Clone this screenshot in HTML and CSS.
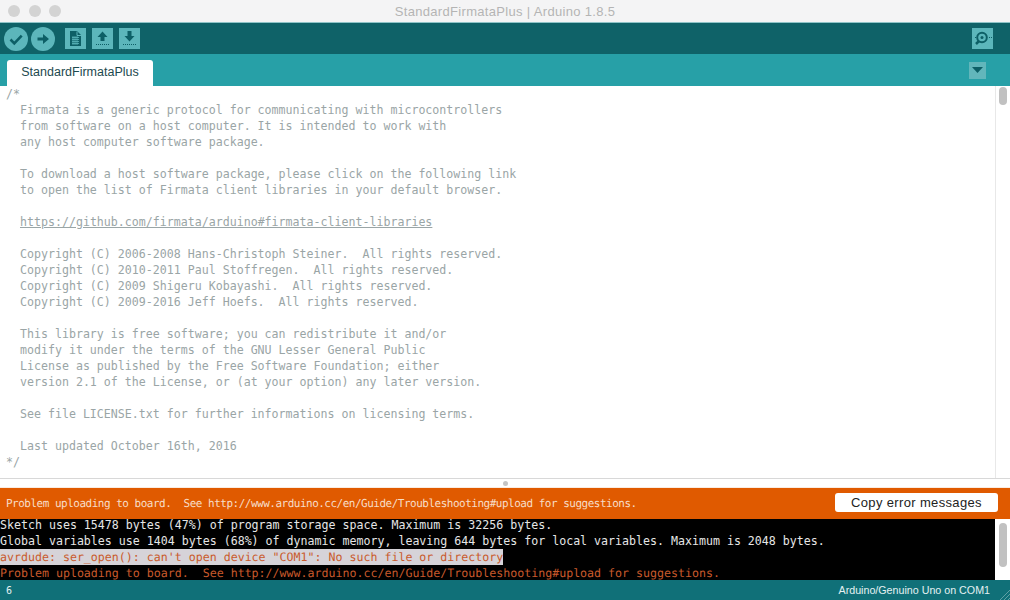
FILE: index.html
```html
<!DOCTYPE html>
<html lang="en">
<head>
<meta charset="utf-8">
<title>StandardFirmataPlus | Arduino 1.8.5</title>
<link rel="stylesheet" href="styles.css">
</head>
<body>
<div class="app">
  <header class="titlebar">
    <div class="lights"><span class="light"></span><span class="light"></span><span class="light"></span></div>
    <div class="title">StandardFirmataPlus | Arduino 1.8.5</div>
  </header>
  <nav class="toolbar">
    <span class="round"><svg width="24" height="24" viewBox="0 0 24 24"><path d="M6.5 12.5l3.8 3.8 7.4-7.6" fill="none" stroke="#0d5f66" stroke-width="2.6"/></svg></span>
    <span class="round"><svg width="24" height="24" viewBox="0 0 24 24"><path d="M6.5 10.6h5.5V7l6 5-6 5v-3.6H6.500z" fill="#0d5f66"/></svg></span>
    <span class="square first"><svg width="21" height="21" viewBox="0 0 21 21"><path d="M5 3h7l4 4v11H5z" fill="#0d5f66"/><path d="M12 3.500v4h4" fill="none" stroke="#5cb6bb"/><path d="M7 9.500h7M7 11.500h7M7 13.500h7M7 15.500h7M8 8v9M10 8v9M12 8v9" stroke="#5cb6bb" stroke-width=".8"/></svg></span>
    <span class="square"><svg width="21" height="21" viewBox="0 0 21 21"><path d="M10.500 3.500l5 5.500h-3v4h-4V9h-3z" fill="#0d5f66"/><path d="M4 16.500h13" stroke="#0d5f66" stroke-dasharray="1 1"/></svg></span>
    <span class="square"><svg width="21" height="21" viewBox="0 0 21 21"><path d="M8.500 3h4v5h3l-5 5.500-5-5.500h3z" fill="#0d5f66"/><path d="M4 16.500h13" stroke="#0d5f66" stroke-dasharray="1 1"/></svg></span>
    <span class="square monitor"><svg width="21" height="21" viewBox="0 0 21 21"><circle cx="10" cy="9.500" r="4.800" fill="none" stroke="#0d5f66" stroke-width="2"/><circle cx="10" cy="9.500" r="1.500" fill="#0d5f66"/><path d="M7 13l-3 3" stroke="#0d5f66" stroke-width="2.500"/><path d="M3 9.500h1M17 9.500h1M19 9.500h1" stroke="#0d5f66"/></svg></span>
  </nav>
  <div class="tabs">
    <div class="tab">StandardFirmataPlus</div>
    <span class="tabmenu"><svg width="11" height="6" viewBox="0 0 11 6"><path d="M0 0h11L5.500 6z" fill="#0d5f66"/></svg></span>
  </div>
  <main class="editor">
<pre class="code">/*
  Firmata is a generic protocol for communicating with microcontrollers
  from software on a host computer. It is intended to work with
  any host computer software package.

  To download a host software package, please click on the following link
  to open the list of Firmata client libraries in your default browser.

  <u>https://github.com/firmata/arduino#firmata-client-libraries</u>

  Copyright (C) 2006-2008 Hans-Christoph Steiner.  All rights reserved.
  Copyright (C) 2010-2011 Paul Stoffregen.  All rights reserved.
  Copyright (C) 2009 Shigeru Kobayashi.  All rights reserved.
  Copyright (C) 2009-2016 Jeff Hoefs.  All rights reserved.

  This library is free software; you can redistribute it and/or
  modify it under the terms of the GNU Lesser General Public
  License as published by the Free Software Foundation; either
  version 2.1 of the License, or (at your option) any later version.

  See file LICENSE.txt for further informations on licensing terms.

  Last updated October 16th, 2016
*/</pre>
    <div class="scroll"><span class="thumb editor-thumb"></span></div>
  </main>
  <div class="divider"><span class="dot"></span></div>
  <div class="status">
    <span class="status-text">Problem uploading to board.  See http://www.arduino.cc/en/Guide/Troubleshooting#upload for suggestions.</span>
    <button class="copy">Copy error messages</button>
  </div>
  <section class="console">
    <div class="console-text">
      <div class="line">Sketch uses 15478 bytes (47%) of program storage space. Maximum is 32256 bytes.</div>
      <div class="line">Global variables use 1404 bytes (68%) of dynamic memory, leaving 644 bytes for local variables. Maximum is 2048 bytes.</div>
      <div class="line err"><span class="sel">avrdude: ser_open(): can't open device "COM1": No such file or directory</span></div>
      <div class="line err">Problem uploading to board.  See http://www.arduino.cc/en/Guide/Troubleshooting#upload for suggestions.</div>
    </div>
    <div class="scroll console-scroll"><span class="thumb console-thumb"></span></div>
  </section>
  <footer class="bottom">
    <span class="lineno">6</span>
    <span class="board">Arduino/Genuino Uno on COM1</span>
    <svg class="grip" width="10" height="10" viewBox="0 0 10 10"><path d="M0 10L10 0M4 10l6-6M8 10l2-2" stroke="#5f9fa4" stroke-width="1"/></svg>
  </footer>
</div>
</body>
</html>
```
FILE: styles.css
```css
* { box-sizing: border-box; }
html, body { margin: 0; padding: 0; }
body { width: 1010px; height: 600px; overflow: hidden; background: #fff; }
.app { display: flex; flex-direction: column; width: 1010px; height: 600px; font-family: "Liberation Sans", Arial, sans-serif; }

.titlebar { flex: 0 0 22px; display: flex; align-items: center; position: relative; background: #f4f4f5; }
.lights { display: flex; gap: 8.500px; padding-left: 8px; }
.light { width: 12px; height: 12px; border-radius: 50%; background: #d3d3d3; }
.title { position: absolute; left: 0; right: 0; text-align: center; font-size: 13px; letter-spacing: .32px; color: #b4b4b4; }

.toolbar { flex: 0 0 32px; display: flex; align-items: center; background: #0f6268; border-top: 1px solid #8fc4c8; padding-left: 4px; padding-right: 17px; gap: 3px; }
.round { width: 24px; height: 24px; border-radius: 50%; background: #5cb6bb; }
.round svg, .square svg { display: block; }
.square { width: 21px; height: 21px; background: #5cb6bb; margin-left: 3px; }
.square.first { margin-left: 7px; }
.square.monitor { margin-left: auto; }

.tabs { flex: 0 0 32px; display: flex; align-items: flex-end; background: #27a0a7; padding-left: 7px; padding-right: 24px; }
.tab { width: 146px; height: 26px; background: #fff; border-radius: 3px 3px 0 0; font-size: 12.500px; line-height: 24px; color: #1d4a4f; text-align: center; }
.tabmenu { margin-left: auto; align-self: center; width: 17px; height: 17px; background: #62b6bb; display: flex; align-items: center; justify-content: center; }

.editor { flex: 0 0 392px; display: flex; background: #fff; overflow: hidden; }
.code { flex: 1; margin: 0; padding: 0 0 0 6px; font-family: "DejaVu Sans Mono", monospace; font-size: 11.620px; line-height: 16px; color: #9aa5a6; }
.scroll { flex: 0 0 15px; background: #fff; border-left: 1px solid #e8e8e8; display: flex; justify-content: center; padding-top: 1px; }
.thumb { width: 8px; border-radius: 4px; background: #c1c1c1; }
.editor-thumb { height: 18px; }

.divider { flex: 0 0 10px; background: linear-gradient(#fff 8px, #f6d9c4); border-top: 1px solid #d8d8d8; display: flex; justify-content: center; align-items: center; }
.dot { width: 5px; height: 5px; border-radius: 50%; background: #c4c4c4; }

.status { flex: 0 0 31px; display: flex; align-items: center; justify-content: space-between; background: #e05a00; padding: 0 12px 0 6px; }
.status-text { font-family: "DejaVu Sans Mono", monospace; font-size: 11px; letter-spacing: -.50px; white-space: pre; color: #f7dcc6; text-rendering: geometricPrecision; }
.copy { width: 163px; height: 19px; margin-bottom: 2px; padding: 0; border: 0; border-radius: 3px; background: #fff; color: #222; font-family: "Liberation Sans", Arial, sans-serif; font-size: 13px; letter-spacing: .35px; line-height: 19px; }

.console { flex: 0 0 61px; display: flex; background: #000; overflow: hidden; }
.console-text { flex: 1; font-family: "DejaVu Sans Mono", monospace; font-size: 11.620px; line-height: 16px; color: #e6e6e6; }
.line { height: 16px; white-space: pre; }
.line:first-child { height: 14px; line-height: 12px; }
.err { color: #c95a2c; text-rendering: geometricPrecision; }
.sel { display: inline-block; height: 16px; background: #d6d3d8; }
.console-scroll { border-left: 0; padding-top: 4px; }
.console-thumb { height: 44px; }

.bottom { flex: 0 0 20px; position: relative; display: flex; align-items: center; justify-content: space-between; background: #107078; padding: 0 20px 0 6px; color: #e4f1f2; font-size: 10px; }
.board { font-size: 10.700px; }
.lineno { font-family: "DejaVu Sans Mono", monospace; }
.grip { position: absolute; right: 0; bottom: 0; }
```
